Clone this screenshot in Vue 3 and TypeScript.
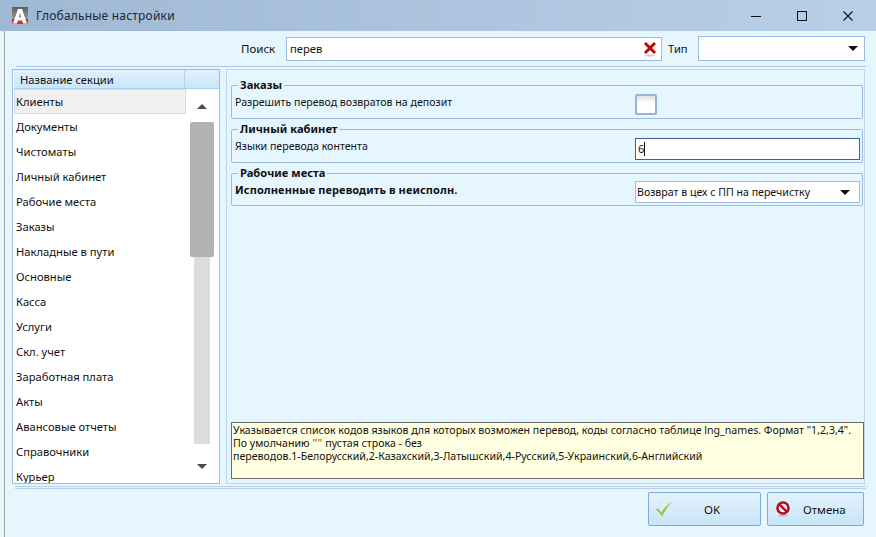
<script setup lang="ts">
const sections: string[] = ['Клиенты','Документы','Чистоматы','Личный кабинет','Рабочие места','Заказы','Накладные в пути','Основные','Касса','Услуги','Скл. учет','Заработная плата','Акты','Авансовые отчеты','Справочники','Курьер']
</script>

<template>
  <div class="win">
    <header class="title">
      <svg class="logo" width="18" height="18" viewBox="0 0 18 18">
        <defs><linearGradient id="lg" x1="0" y1="0" x2="0" y2="1"><stop offset="0" stop-color="#5d5d60"/><stop offset="1" stop-color="#9a9a9c"/></linearGradient></defs>
        <path d="M2 0H16A1 1 0 0 1 17 1V12H1V1A1 1 0 0 1 2 0Z" fill="url(#lg)"/>
        <path d="M1 12H17V15Q17 17 15 17H3Q1 17 1 15Z" fill="#ec2732"/>
        <path fill-rule="evenodd" d="M2 16.5L7 2H11L16 16.5H12L11.2 13.5H6.8L6 16.5ZM7.7 10.5H10.3L9 6Z" fill="#fff"/>
      </svg>
      <span class="title-text">Глобальные настройки</span>
      <div class="controls">
        <svg width="14" height="14" viewBox="0 0 14 14"><path d="M2 7.5H12" stroke="#111" stroke-width="1"/></svg>
        <svg width="14" height="14" viewBox="0 0 14 14"><rect x="2.5" y="2.5" width="9" height="9" fill="none" stroke="#111"/></svg>
        <svg width="14" height="14" viewBox="0 0 14 14"><path d="M2.5 2.5L11.5 11.5M11.5 2.5L2.5 11.5" stroke="#111" stroke-width="1.1"/></svg>
      </div>
    </header>

    <main class="body">
      <div class="search">
        <span class="lbl-search">Поиск</span>
        <div class="s-input">
          <span>перев</span>
          <svg width="14" height="16" viewBox="0 0 14 16"><ellipse cx="7" cy="14.5" rx="5" ry="1" fill="#ccc"/><path d="M2 2L12 12M12 2L2 12" stroke="#c00a0a" stroke-width="3"/></svg>
        </div>
        <span class="lbl-type">Тип</span>
        <div class="s-select"><i class="caret"></i></div>
      </div>
      <div class="sep"></div>

      <div class="panels">
        <aside class="list">
          <div class="list-head"><span class="lh-a">Название секции</span><span class="lh-b"></span></div>
          <div class="rows">
            <div v-for="(s, i) in sections" :key="s" class="row" :class="{ sel: i === 0 }">{{ s }}</div>
          </div>
          <div class="scroll">
            <i class="arr up"></i>
            <div class="track"><div class="thumb"></div></div>
            <i class="arr down"></i>
          </div>
        </aside>

        <section class="right">
          <div class="groups">
            <fieldset class="grp">
              <legend>Заказы</legend>
              <span class="g-label">Разрешить перевод возвратов на депозит</span>
              <div class="check"></div>
            </fieldset>
            <fieldset class="grp">
              <legend>Личный кабинет</legend>
              <span class="g-label">Языки перевода контента</span>
              <div class="edit">6<i class="cursor"></i></div>
            </fieldset>
            <fieldset class="grp last">
              <legend>Рабочие места</legend>
              <span class="g-label strong">Исполненные переводить в неисполн.</span>
              <div class="combo"><span>Возврат в цех с ПП на перечистку</span><i class="caret"></i></div>
            </fieldset>
          </div>
          <div class="hint">Указывается список кодов языков для которых возможен перевод, коды согласно таблице lng_names. Формат "1,2,3,4".<br>По умолчанию <b class="q">""</b> пустая строка - без<br>переводов.1-Белорусский,2-Казахский,3-Латышский,4-Русский,5-Украинский,6-Английский</div>
        </section>
      </div>

      <div class="sep2"></div>

      <div class="actions">
        <button class="btn ok" type="button">
          <svg width="20" height="20" viewBox="0 0 20 20"><path d="M1.5 10.5 L4 9.5 L7.5 13.5 C10 9 14 5 18.5 2.5 C14 7 11 12 8 17.5 C6 14.5 4 12 1.5 10.5 Z" fill="#9ac43c"/></svg>
          <span>OK</span>
        </button>
        <button class="btn cancel" type="button">
          <svg width="16" height="18" viewBox="0 0 16 18"><ellipse cx="8" cy="15.5" rx="5" ry="1" fill="#aebfcc"/><circle cx="8" cy="8" r="5.5" fill="#fff" stroke="#b80d1c" stroke-width="2.6"/><path d="M4.2 4.2L11.8 11.8" stroke="#b80d1c" stroke-width="2.4"/></svg>
          <span>Отмена</span>
        </button>
      </div>
    </main>
  </div>
</template>

<style>
html, body { margin: 0; padding: 0; }
</style>

<style scoped>
.win { width: 876px; height: 537px; display: flex; flex-direction: column; background: #e6f6ff; font-family: "Noto Sans", "DejaVu Sans", sans-serif; font-size: 11.2px; color: #111; overflow: hidden; }
.title { height: 31px; flex: none; display: flex; align-items: center; background: linear-gradient(90deg, #9fb8d3, #b8cfe9); padding-left: 11px; }
.logo { margin-right: 7px; }
.title-text { font-size: 12px; color: #1c2733; letter-spacing: .2px; }
.controls { margin-left: auto; display: flex; gap: 32px; padding-right: 21px; }
.body { flex: 1; min-height: 0; display: flex; flex-direction: column; margin-left: 4px; border-left: 1px solid #a5a5a5; }
.search { height: 31px; margin: 2px 0; display: flex; align-items: center; flex: none; }
.lbl-search { margin-left: 236px; width: 45px; font-size: 11.5px; }
.s-input { height: 22px; background: #fff; border: 1px solid #9cbbe4; display: flex; align-items: center; justify-content: space-between; padding: 0 4px 0 3px; box-sizing: content-box; width: 367px; }
.lbl-type { margin-left: 6px; width: 30px; }
.s-select { width: 165px; height: 23px; background: #fff; border: 1px solid #9cbbe4; display: flex; align-items: center; justify-content: flex-end; }
.s-select .caret { margin-right: 6px; }
.caret { width: 0; height: 0; border-left: 5px solid transparent; border-right: 5px solid transparent; border-top: 5px solid #111; }
.sep { height: 1px; background: #a9c6ea; margin: 0 10px 0 11px; flex: none; }
.panels { height: 415px; flex: none; margin-top: 2px; display: flex; gap: 6px; padding-left: 7px; }
.list { width: 206px; position: relative; background: #fff; border: 1px solid #9cbbe4; overflow: hidden; }
.list-head { height: 18px; display: flex; background: linear-gradient(#e0f2fc, #c9e6f8); border-bottom: 1px solid #a9d0ee; margin: 0 0 0 1px; }
.lh-a { width: 171px; border-right: 1px solid #b9d4ea; padding-left: 6px; box-sizing: border-box; line-height: 19px; }
.lh-b { flex: 1; }
.rows { margin-left: 1px; }
.row { height: 25px; line-height: 25px; padding-left: 2px; }
.row.sel { width: 172px; background: #f0f0f0; box-shadow: inset 0 0 0 1px #dcdcdc; box-sizing: border-box; }
.scroll { position: absolute; left: 176px; top: 20px; width: 26px; height: 395px; }
.arr { position: absolute; left: 8px; width: 0; height: 0; border-left: 5px solid transparent; border-right: 5px solid transparent; }
.arr.up { top: 14px; border-bottom: 5px solid #4a4a4a; }
.arr.down { top: 374px; border-top: 5px solid #4a4a4a; }
.track { position: absolute; left: 5px; top: 32px; width: 16px; height: 322px; background: #dcdcdc; }
.thumb { margin-left: -4px; width: 24px; height: 135px; background: #b2b2b2; border-radius: 2px; }
.right { width: 639px; flex: none; display: flex; flex-direction: column; border: 1px solid #bcd6f2; padding: 9px 1px 4px 4px; box-sizing: border-box; }
.groups { flex: 1; display: flex; flex-direction: column; gap: 4px; }
.grp { position: relative; margin: 0; height: 40px; box-sizing: border-box; border: 1px solid #9cbbe4; border-radius: 2px; padding: 0 3px; display: flex; align-items: center; justify-content: space-between; min-inline-size: 0; }
.grp.last { height: 39px; }
legend { font-size: 11.2px; font-weight: 700; padding: 0 2px; margin-left: 3px; line-height: 12px; color: #111; }
.g-label { align-self: flex-start; margin-top: 4px; font-size: 10.6px; }
.strong { font-weight: 700; font-size: 11px; letter-spacing: .1px; margin-top: 3px; }
.check { position: absolute; left: 403px; top: 3px; width: 22px; height: 21px; box-sizing: border-box; background: linear-gradient(#e0e0e0, #fff 40%); border: 2px solid #95b3dc; border-radius: 2px; }
.edit { position: absolute; left: 403px; top: 3px; width: 225px; height: 22px; box-sizing: border-box; background: #fff; border: 1px solid #3f6391; padding-left: 2px; line-height: 20px; }
.cursor { display: inline-block; width: 1px; height: 14px; background: #111; vertical-align: -3px; }
.combo { position: absolute; left: 403px; top: 2px; width: 225px; height: 22px; box-sizing: border-box; background: #fff; border: 1px solid #9cbbe4; padding: 0 9px 0 1px; display: flex; align-items: center; justify-content: space-between; font-size: 10.6px; }
.hint { height: 57px; flex: none; box-sizing: border-box; background: #ffffe1; border: 1px solid #6b6b6b; padding: 1px 1px 0; line-height: 13px; font-size: 10.6px; width: 633px; }
.q { color: #d98a00; }
.sep2 { height: 3px; box-sizing: border-box; border-top: 1px solid #b7d0ec; border-bottom: 1px solid #b7d0ec; margin: 2px 10px 0 10px; flex: none; }
.actions { display: flex; justify-content: flex-end; gap: 6px; padding: 3px 12px 0 0; }
.btn { height: 34px; border: 1px solid #82a9dc; border-radius: 2px; background: linear-gradient(#e3f3fd, #c8e5f7); font: inherit; font-size: 11.5px; color: #111; display: flex; align-items: center; padding: 0; }
.ok { width: 113px; padding-left: 5px; }
.ok span { margin-left: 30px; }
.cancel { width: 97px; padding-left: 7px; }
.cancel span { margin-left: 12px; }
</style>
